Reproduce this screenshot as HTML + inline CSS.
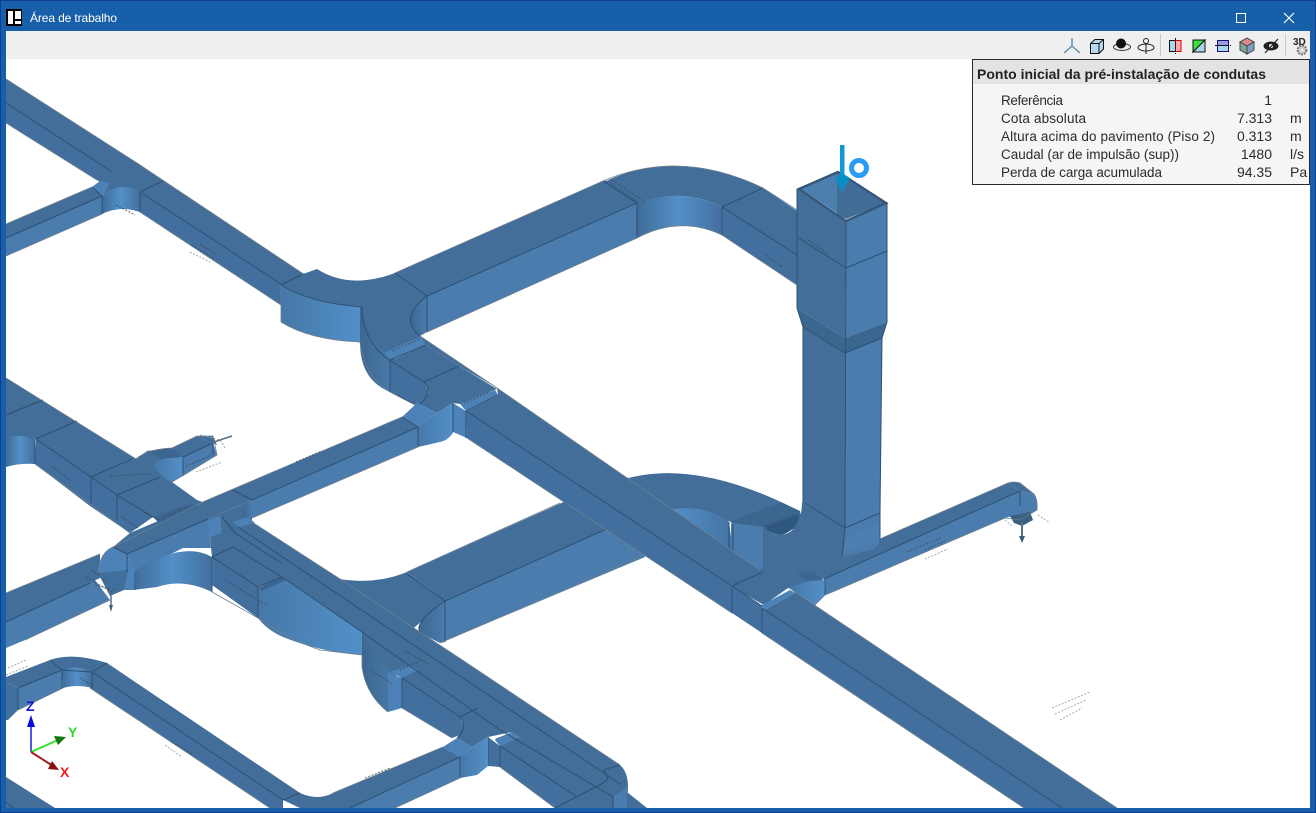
<!DOCTYPE html>
<html><head><meta charset="utf-8"><style>
html,body{margin:0;padding:0;background:#fff;overflow:hidden}
svg{display:block}
.t{fill:#436e9a}.s{fill:#4a7cad}.d{fill:#426f9d}.l{fill:#4d82b8}.k{fill:#3b6690}
.e{fill:none;stroke:#2d5073;stroke-width:1}
.o{fill:none;stroke:#6d7f90;stroke-width:.8}
.n{fill:none;stroke:#3a4a58;stroke-width:1.1;stroke-dasharray:2 1.5;opacity:.75}
.g{fill:none;stroke:#a5abb0;stroke-width:1;stroke-dasharray:2 1.5}
text{font-family:"Liberation Sans",sans-serif}
.p{font-size:13.5px;fill:#2b2b2b}
.v{font-size:14px;fill:#2b2b2b}
</style></head><body>
<svg width="1316" height="813" viewBox="0 0 1316 813" xmlns="http://www.w3.org/2000/svg">
<defs>
<linearGradient id="b" x1="0" x2="1" y1="0" y2="0"><stop offset="0" stop-color="#3f6c99"/><stop offset=".5" stop-color="#5290c8"/><stop offset="1" stop-color="#436f9e"/></linearGradient>
<linearGradient id="r" x1="0" x2="1" y1="0" y2="0"><stop offset="0" stop-color="#4678a8"/><stop offset="1" stop-color="#5290c8"/></linearGradient>
<linearGradient id="f" x1="0" x2="1" y1="0" y2="0"><stop offset="0" stop-color="#5290c8"/><stop offset="1" stop-color="#4473a3"/></linearGradient>
<linearGradient id="q" x1="0" x2="1" y1="0" y2="0"><stop offset="0" stop-color="#3c6791"/><stop offset="1" stop-color="#4a7cad"/></linearGradient>
</defs>
<rect width="1316" height="813" fill="#fff"/>

<!-- top-left duct -->
<polygon class="d" points="6,103 112,172 140,192 281,284 281,305 140,212 97,180 6,123"/>
<polygon class="t" points="6,79 137,163 305,275 281,285 140,192 112,172 6,103"/>
<polygon class="t" points="6,224 92,187 102,196 6,238"/>
<polygon class="s" points="6,238 102,196 102,214 6,256"/>
<polygon class="l" points="92,187 100,181 110,183 102,196"/>
<path class="t" d="M100,181L112,172L132,163H137L163,181L140,192Q120,180 102,196L110,183Z"/>
<path fill="url(#b)" d="M102,196Q120,180 140,192V212Q120,205 102,214Z"/>
<path class="e" d="M6,103L112,172M140,192L281,284M6,238L102,196M140,192L163,181M92,187L102,196M140,192V212M102,196V214"/>
<path class="o" d="M6,79L137,163L305,275M6,123L97,180M140,212L281,305M6,224L92,187M6,256L102,214"/>

<!-- upper right duct and elbow -->
<polygon class="t" points="395,273 603,181 637,203 427,296"/>
<polygon class="s" points="427,296 637,203 637,238 427,332"/>
<polygon class="k" points="603,181 613,180 645,202 637,203"/>
<path class="t" d="M608,180Q680,148 763,188L722,207Q680,187 640,203Z"/>
<path fill="url(#b)" d="M637,203Q680,187 722,207V235Q680,215 637,238Z"/>
<polygon class="t" points="763,188 800,213 797,255 722,207"/>
<polygon class="d" points="722,207 797,255 797,285 722,235"/>
<path class="e" d="M427,296L637,203V238M603,181L637,203M722,207V235M722,207L763,188M722,207L797,255"/>
<path class="o" d="M395,273L603,181Q680,148 763,188L797,210M427,332L637,238Q680,215 722,235L797,285"/>
<path class="n" d="M766,255L782,267M612,180L645,202"/>

<!-- T junction upper -->
<path fill="url(#r)" d="M281,285Q310,303 362,307L360,342Q310,340 281,322Z"/>
<path fill="url(#q)" d="M360,303L396,350L390,392Q360,380 360,342Z"/>
<path class="t" d="M303,274L317,269Q350,290 395,273L427,296Q400,318 420,336L426,345L390,360L385,352Q365,335 362,307Q310,303 281,285Z"/>
<path fill="url(#q)" d="M427,296Q398,318 420,336L427,332Z"/>
<polygon class="l" points="385,352 420,337 426,345 390,360"/>
<polygon class="t" points="390,361 426,345 459,366 424,382"/>
<polygon class="d" points="390,361 424,382 429,394 417,406 390,392"/>
<polygon class="t" points="420,336 497,388 459,366 426,345"/>
<polygon class="t" points="424,382 459,366 497,389 460,404 453,403 437,413 417,403 429,393"/>
<path class="e" d="M281,285Q310,303 362,307Q362,340 389,360L424,382Q434,393 418,406M427,296V332M427,296Q398,318 420,336M390,360L426,345M424,382L459,366M395,273L427,296M303,274L281,285M390,361V392"/>
<path class="o" d="M281,285V322Q310,340 360,342Q365,378 390,392L417,406M420,336L497,388"/>
<path class="n" d="M392,351L420,339M398,395L412,403M414,401L420,408"/>

<!-- middle duct -->
<polygon class="t" points="113,547 130,533 205,501 402,417 418,427 252,500 208,519 127,554"/>
<polygon class="s" points="252,500 418,427 418,447 252,518"/>
<polygon class="l" points="402,417 417,403 437,413 418,427"/>
<path fill="url(#r)" d="M418,427L437,413L453,403V433Q447,441 440,442L418,447Z"/>
<polygon class="l" points="453,403 466,411 467,438 453,432"/>
<polygon class="l" points="460,404 495,390 498,395 466,411"/>
<path class="e" d="M252,500L418,427V447M233,490L252,500M402,417L418,427M453,403V432M466,411V438M466,411L498,395"/>
<path class="o" d="M205,501L402,417M252,518L418,447"/>
<path class="n" d="M296,462L322,451M464,403L490,392"/>

<!-- lower horizontal duct & large elbow -->
<polygon class="t" points="407,572 575,497 640,520 445,601"/>
<polygon class="s" points="445,601 640,514 645,557 440,643"/>
<path class="t" d="M340,579Q375,585 407,572L445,601L400,640L360,625Z"/>
<path fill="url(#q)" d="M445,601Q410,625 422,634L440,643L445,642Z"/>
<path class="e" d="M407,574L445,601V642M445,601L640,514M445,601Q410,625 422,634"/>
<path class="o" d="M407,572L560,503M440,643L640,557"/>

<path class="t" d="M610,486L625,479Q690,460 781,502L733,522L672,511Z"/>
<path fill="url(#f)" d="M670,510Q703,503 729,522L733,553Z"/>
<polygon class="k" points="730,522 781,502 800,511 803,528 765,532 745,528"/>
<path fill="#2f587f" d="M765,527L798,515Q800,528 782,535Q770,535 765,527Z"/>
<polygon fill="#4a7cad" points="731,523 765,527 765,574 731,551"/>
<path class="e" d="M729,522V549M733,524V552"/>
<path class="n" d="M765,526L797,514"/>

<!-- right branch -->
<polygon class="t" points="797,573 882,538 1008,483 1020,491 824,579 810,575"/>
<polygon class="s" points="824,579 1020,491 1020,514 1005,518 837,590 825,595"/>
<path class="t" d="M1008,483Q1014,481 1020,483L1034,494L1020,491Z"/>
<path fill="#4a7cad" d="M1020,491L1034,494Q1038,500 1037,510L1020,520Z"/>
<polygon fill="#38607f" points="1010,516 1030,512 1033,520 1022,526 1014,523"/>
<path d="M1022,522V538" stroke="#5c6f80" stroke-width="2"/>
<polygon fill="#3b5d7a" points="1019,536 1025,536 1022,543"/>
<path class="e" d="M824,579L1020,491V506"/>
<path class="o" d="M882,538L1008,483Q1014,481 1020,483L1034,494Q1038,500 1037,510L1020,520L1005,518L837,590"/>
<path class="n" d="M907,552L941,538M925,550L945,541"/>
<path class="g" d="M925,559L948,549M1005,520L1012,526M1038,515L1050,523"/>

<!-- elbow + vertical -->
<path class="t" d="M763,526Q775,540 790,532Q802,522 802,502L845,528V557H842L813,568Q790,578 763,572Z"/>
<path class="s" d="M845,528L880,513V540Q878,548 870,550L842,557Z"/>
<polygon fill="#4d80b0" points="845,538 880,523 880,540 845,552"/>
<polygon class="t" points="803,327 845,353 845,528 803,502"/>
<polygon class="s" points="845,353 882,338 880,513 845,528"/>
<polygon class="t" points="797,189 846,222 845,338 797,308"/>
<polygon class="s" points="846,222 887,203 887,322 845,338"/>
<polygon class="k" points="797,308 845,338 845,353 803,327"/>
<polygon class="k" points="845,338 887,322 882,338 845,353"/>
<polygon fill="#4c7eae" points="801,189 837,173 837,214 846,219"/>
<polygon fill="#426d99" points="837,173 885,203 846,219 837,214"/>
<polygon fill="none" stroke="#34577a" stroke-width="2.5" points="799,189 838,172 886,203 846,221"/>
<path class="e" d="M846,222L845,528M797,237L846,268L887,251M803,327L845,353L882,338M803,502L845,528L880,513M845,528L842,557M797,189V308L803,327V502M887,203V322L882,338L880,513V540"/>
<path class="n" d="M808,240L828,254"/>

<!-- main diagonal -->
<polygon class="d" points="466,411 732,586 732,613 467,438"/>
<polygon class="t" points="497,388 763,572 732,586 466,411 498,395"/>
<path class="e" d="M466,411L732,586"/>
<path class="o" d="M497,388L763,572M467,438L732,613"/>
<path class="t" d="M763,568L797,568L808,582L788,588L764,605L730,586Z"/>
<polygon class="k" points="797,573 813,572 824,580 808,582"/>
<path fill="url(#r)" d="M788,588L808,581L824,580L825,595L815,605L792,590Z"/>
<polygon class="d" points="732,586 762,606 762,633 732,613"/>
<polygon class="l" points="762,605 790,590 795,593 764,610"/>
<polygon class="t" points="792,590 1117,808 1062,808 762,608 764,610 795,593"/>
<polygon class="d" points="762,608 1062,808 1024,808 762,633"/>
<path class="e" d="M732,586L763,572M732,586L762,606V633M732,586V613M762,608L1062,808M825,580V595"/>
<path class="o" d="M792,590L1117,808M762,633L1024,808M815,605L825,595L837,590"/>

<!-- left cluster -->
<polygon class="d" points="36,439 91,477 117,495 153,517 130,533 90,506 35,464"/>
<polygon class="t" points="6,378 136,459 147,451 172,448 183,457 163,459 155,468 172,482 197,500 205,503 192,510 153,517 117,495 91,477 36,439 6,437"/>
<polygon class="k" points="147,451 172,448 183,457 163,459"/>
<polygon class="t" points="172,448 197,436 213,443 183,457"/>
<polygon fill="#3d6a96" points="197,436 213,436 217,445 213,443"/>
<polygon class="s" points="183,457 213,443 217,455 183,476 172,482"/>
<path fill="url(#r)" d="M163,459Q150,465 155,468Q165,480 172,482L183,476V457Z"/>
<path fill="url(#b)" d="M6,437Q20,434 35,439V464Q20,463 6,467Z"/>
<polygon class="k" points="153,517 192,503 198,507 160,524"/>
<path class="e" d="M36,439L91,477L117,495L153,517M35,439V464M91,477V505M117,495V520M91,477L132,459M117,495L160,477M36,439L77,421M6,415L43,400M183,457L213,443V455M183,457V476"/>
<path class="n" d="M10,413L38,402M110,476L150,474M52,467L70,480M122,517L138,528M158,520L190,506M186,466L212,455"/>
<path class="g" d="M200,435L220,440L225,448M196,472L222,462"/>
<path d="M214,442L232,436" stroke="#5a7085" stroke-width="1.5"/>
<path class="o" d="M6,378L136,459M35,464L130,533M136,459Q147,449 172,448L197,436H213L217,455L172,482"/>

<polygon class="t" points="6,593 100,554 100,578 6,622"/>
<polygon class="s" points="6,622 95,580 110,600 25,640 6,648"/>
<path class="e" d="M6,622L90,583"/>
<polygon class="s" points="127,554 208,519 211,548 183,548 135,572"/>
<path fill="url(#b)" d="M133,572Q183,540 212,557V592Q183,578 157,587L133,590Z"/>
<path fill="#4d82b8" d="M113,547Q100,552 98,573L110,594L123,590L136,590V572L127,554Z"/>
<path fill="#416f9c" d="M98,573L110,596L124,590L128,570Z"/>
<path class="e" d="M113,547L127,554L208,519M127,554V572M135,572V590M212,557V592"/>
<path class="o" d="M6,593L100,554M113,547L205,501M25,640L110,600M98,573Q100,552 113,547"/>
<path class="n" d="M92,570L108,583M86,577L112,592M95,585L115,590M144,512L158,520M225,530L245,543"/>
<path d="M111,595V607" stroke="#55708a" stroke-width="1.5"/>
<polygon fill="#3f5f7c" points="109,605 113,605 111,612"/>

<!-- main 2 -->
<path fill="url(#r)" d="M258,588L282,577L333,612L362,632V655Q320,652 283,637Q267,630 258,618Z"/>
<path fill="url(#q)" d="M362,625L398,668L388,712Q366,695 362,667Z"/>
<polygon class="l" points="388,673 402,678 402,708 388,712"/>
<polygon class="d" points="212,557 258,587 258,618 212,585"/>
<polygon class="d" points="402,678 460,717 464,728 460,735 452,738 402,708"/>
<path class="t" d="M208,519L252,500L252,522L340,579L463,660L620,765Q628,772 628,787L627,808H555L577,797L500,746L495,739L512,732L488,737L472,747L457,738Q468,728 460,717L402,678L390,672Q370,655 362,632L333,612L282,577L258,587L212,557L210,537Z"/>
<polygon class="l" points="208,520 220,516 222,533 210,537"/>
<path fill="url(#q)" d="M252,500Q236,510 248,520L252,518Z"/>
<polygon class="l" points="233,522 248,517 255,523 238,527"/>
<polygon class="d" points="488,737 500,746 500,767 488,766"/>
<polygon class="d" points="500,746 577,797 577,808 555,808 500,767"/>
<polygon class="k" points="258,588 282,577 286,580 262,591"/>
<polygon class="l" points="390,672 410,665 418,670 402,678"/>
<polygon class="l" points="495,740 512,732 520,737 500,746"/>
<polygon fill="#4a7cad" points="613,797 627,787 628,805 627,808 613,808"/>
<polygon class="t" points="627,792 647,808 627,808"/>
<path class="e" d="M238,527L500,703L620,784M222,517L235,533L281,563M233,547L282,577L333,612L362,632L500,730L613,797M212,557L258,587V618M212,557L233,547M258,587L282,577M402,678L460,717M478,708L460,717M460,717Q468,728 457,738M500,746L577,797M402,678V708M488,737V766M500,746V767M613,797V808M555,808L603,783M603,770Q612,778 603,783M603,770L620,765"/>
<path class="o" d="M252,522L340,579L620,765M212,592L258,618Q283,637 320,650L362,655V667Q366,695 388,712M402,708L452,738M500,767L555,808"/>
<path class="n" d="M225,580L268,606M400,670L418,662M405,651L430,665M370,670L392,684"/>

<!-- bottom-left loop -->
<polygon class="t" points="6,777 55,808 6,808"/>
<path class="e" d="M6,802L13,808"/>
<path class="t" d="M6,677L50,660Q72,652 107,663L300,793Q318,801 333,793L443,747L460,757L350,808H300L283,800L92,672L62,670L18,688L6,682Z"/>
<polygon class="d" points="92,672 283,800 283,808 270,808 90,688"/>
<polygon class="s" points="350,808 460,757 460,778 395,808"/>
<polygon class="l" points="443,747 457,738 472,747 460,757"/>
<path fill="url(#r)" d="M460,757L472,747L488,737V766L477,775L460,778Z"/>
<path fill="url(#b)" d="M62,670Q77,664 92,672V688Q77,684 63,688Z"/>
<polygon class="s" points="18,688 62,670 63,688 18,710"/>
<polygon class="d" points="6,682 18,688 18,710 8,720 6,720"/>
<path class="e" d="M18,688L62,670L92,672L283,800M50,660L62,670M107,663L92,672M62,670V688M92,672V688M18,688V710M350,808L460,757V778M300,793L283,800"/>
<path class="o" d="M90,688L270,808M18,710L63,688M443,747L333,793M460,778L395,808"/>
<path class="n" d="M80,678L95,687M172,742L192,754M365,778L390,768"/>
<path class="g" d="M6,675L28,666M165,745L182,757M8,668L26,660"/>

<!-- scattered annotations -->
<path class="n" d="M191,245L214,258M200,244L216,254M116,205L135,215"/>
<path class="g" d="M190,252L210,262M1052,708L1090,692M1055,714L1086,700M1060,720L1082,708"/>

<!-- arrow and ring -->
<rect x="840" y="145" width="4.5" height="33" fill="#0f9ad4"/>
<polygon points="835,178 842,173 850,178 842,192" fill="#0a8fc4"/>
<circle cx="859" cy="168" r="7.5" fill="none" stroke="#2b9cf2" stroke-width="5"/>

<!-- gizmo -->
<path d="M31,752V722" stroke="#1a1ad0" stroke-width="1.5"/>
<polygon points="31,715 27,727 35,727" fill="#0c0ce0"/>
<text x="26" y="711" font-size="14" font-weight="700" fill="#1414d8">Z</text>
<path d="M31,752L58,740" stroke="#33e033" stroke-width="2"/>
<polygon points="66,737 54,736 58,745" fill="#0f7a0f"/>
<text x="68" y="737" font-size="14" font-weight="700" fill="#2cd82c">Y</text>
<path d="M31,752L53,766" stroke="#a02020" stroke-width="2"/>
<polygon points="59,770 52,761 48,769" fill="#8a1010"/>
<text x="60" y="777" font-size="14" font-weight="700" fill="#ee1c1c">X</text>

<!-- frame -->
<rect x="0" y="0" width="1316" height="59" fill="#175fa9"/>
<rect x="0" y="0" width="6" height="813" fill="#175fa9"/>
<rect x="1310" y="0" width="6" height="813" fill="#175fa9"/>
<rect x="0" y="808" width="1316" height="5" fill="#175fa9"/>
<rect x=".5" y=".5" width="1315" height="812" fill="none" stroke="#0c3f92"/>
<rect x="6" y="31" width="1304" height="28" fill="#efefef"/>

<!-- title -->
<rect x="6" y="9" width="16" height="17" fill="#000"/>
<rect x="8" y="11" width="5" height="13" fill="#fff"/>
<rect x="15" y="11" width="6" height="8" fill="#fff"/>
<rect x="15" y="21" width="6" height="3" fill="#fff"/>
<text x="30" y="22" font-size="12" fill="#fff" textLength="87" lengthAdjust="spacing">Área de trabalho</text>
<rect x="1236.5" y="13.5" width="9" height="9" fill="none" stroke="#fff" stroke-width="1"/>
<path d="M1284,13L1294,23M1294,13L1284,23" stroke="#fff" stroke-width="1.2"/>

<!-- toolbar icons -->
<path d="M1072,38V46L1064,53M1072,46L1080,53" fill="none" stroke="#5f8aa8" stroke-width="1.4"/>
<path d="M1090.5,43.5L1095,39.5H1103.5V49L1099,53.5H1090.5Z" fill="#b7dcef" stroke="#111" stroke-width="1"/>
<path d="M1090.5,43.5H1099V53.5M1099,43.5L1103.5,39.5" fill="none" stroke="#111"/>
<ellipse cx="1122" cy="47" rx="8.5" ry="3.5" fill="none" stroke="#333"/>
<circle cx="1121" cy="43.5" r="5" fill="#111"/>
<circle cx="1146" cy="41" r="2.5" fill="none" stroke="#222"/>
<path d="M1146,43V54" stroke="#222"/>
<ellipse cx="1146" cy="47.5" rx="8" ry="3.5" fill="none" stroke="#222"/>
<rect x="1160" y="34" width="1" height="22" fill="#c9c9c9"/>
<rect x="1169.5" y="40.5" width="6" height="11" fill="#a9d6ec" stroke="#111"/>
<rect x="1175.5" y="40.5" width="5.5" height="11" fill="#f5a9a9" stroke="#e00000"/>
<path d="M1175.5,38V54" stroke="#111" stroke-dasharray="2 1"/>
<polygon points="1193,52 1193,40 1205,40" fill="#3de03d" stroke="#111"/>
<polygon points="1193,52 1205,52 1205,40" fill="#a9d6ec" stroke="#111"/>
<rect x="1217.5" y="40.5" width="11" height="11" fill="#a9d6ec" stroke="#12127a"/>
<rect x="1217.5" y="40.5" width="11" height="5" fill="#9a9ae0" stroke="#12127a"/>
<path d="M1215,45.5H1231" stroke="#111" stroke-dasharray="2 1"/>
<polygon points="1247,38 1254,42 1247,46 1240,42" fill="#d98a8a" stroke="#444"/>
<polygon points="1240,42 1247,46 1247,54 1240,50" fill="#7fa98f" stroke="#444"/>
<polygon points="1254,42 1247,46 1247,54 1254,50" fill="#7d9fc4" stroke="#444"/>
<ellipse cx="1271" cy="46" rx="7.5" ry="4.5" fill="#222"/>
<circle cx="1271" cy="46" r="2" fill="#eee"/>
<path d="M1265,53L1278,39" stroke="#222" stroke-width="1.2"/>
<rect x="1285" y="34" width="1" height="22" fill="#c9c9c9"/>
<text x="1293" y="45" font-size="10" font-weight="700" fill="#222">3D</text>
<circle cx="1302" cy="50" r="4.5" fill="#c8c8c8" stroke="#777" stroke-width="1.8" stroke-dasharray="2 1"/>
<circle cx="1302" cy="50" r="1.5" fill="#efefef"/>

<!-- info panel -->
<rect x="972.5" y="59.5" width="337" height="125" fill="#f5f5f5" stroke="#2a2a2a"/>
<rect x="973" y="60" width="336" height="24" fill="#e3e3e3"/>
<text x="977" y="79" font-size="14" font-weight="700" fill="#222" textLength="289" lengthAdjust="spacing">Ponto inicial da pré-instalação de condutas</text>
<text class="p" x="1001" y="105" textLength="62" lengthAdjust="spacing">Referência</text>
<text class="p" x="1001" y="123" textLength="85" lengthAdjust="spacing">Cota absoluta</text>
<text class="p" x="1001" y="141" textLength="214" lengthAdjust="spacing">Altura acima do pavimento (Piso 2)</text>
<text class="p" x="1001" y="159" textLength="178" lengthAdjust="spacing">Caudal (ar de impulsão (sup))</text>
<text class="p" x="1001" y="177" textLength="161" lengthAdjust="spacing">Perda de carga acumulada</text>
<g text-anchor="end">
<text class="v" x="1272" y="105">1</text>
<text class="v" x="1272" y="123">7.313</text>
<text class="v" x="1272" y="141">0.313</text>
<text class="v" x="1272" y="159">1480</text>
<text class="v" x="1272" y="177">94.35</text>
</g>
<text class="v" x="1290" y="123">m</text>
<text class="v" x="1290" y="141">m</text>
<text class="v" x="1290" y="159">l/s</text>
<text class="v" x="1290" y="177">Pa</text>
</svg>
</body></html>
